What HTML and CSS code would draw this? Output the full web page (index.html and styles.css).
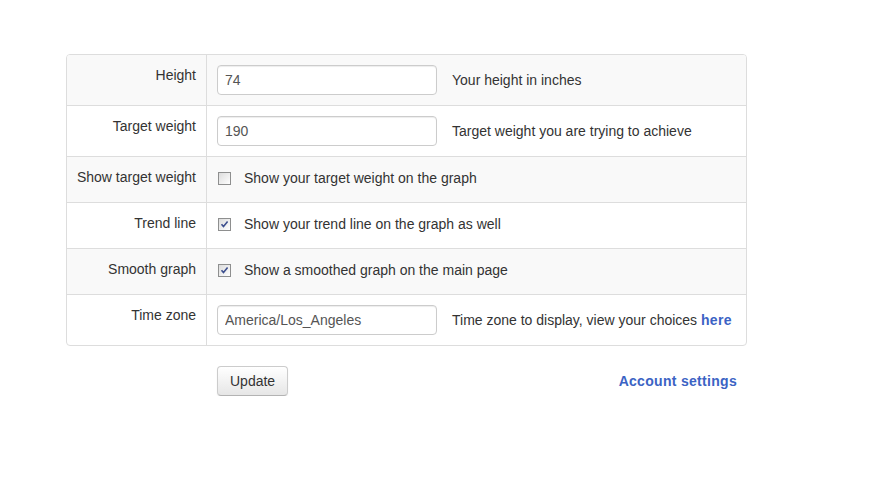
FILE: index.html
```html
<!DOCTYPE html>
<html>
<head>
<meta charset="utf-8">
<link rel="stylesheet" href="styles.css">
</head>
<body>
<div class="page">
  <div class="form-table">
    <div class="row row-input">
      <div class="label">Height</div>
      <div class="value"><input class="text" type="text" value="74"><span class="help">Your height in inches</span></div>
    </div>
    <div class="row row-input">
      <div class="label">Target weight</div>
      <div class="value"><input class="text" type="text" value="190"><span class="help">Target weight you are trying to achieve</span></div>
    </div>
    <div class="row row-check">
      <div class="label">Show target weight</div>
      <div class="value"><label class="check"><span class="box"></span>Show your target weight on the graph</label></div>
    </div>
    <div class="row row-check">
      <div class="label">Trend line</div>
      <div class="value"><label class="check"><span class="box"><svg width="11" height="11" viewBox="0 0 11 11"><path d="M2.5 5.2 L4.5 7.6 L8.6 2.6" fill="none" stroke="#3d4f8e" stroke-width="1.6"/></svg></span>Show your trend line on the graph as well</label></div>
    </div>
    <div class="row row-check">
      <div class="label">Smooth graph</div>
      <div class="value"><label class="check"><span class="box"><svg width="11" height="11" viewBox="0 0 11 11"><path d="M2.5 5.2 L4.5 7.6 L8.6 2.6" fill="none" stroke="#3d4f8e" stroke-width="1.6"/></svg></span>Show a smoothed graph on the main page</label></div>
    </div>
    <div class="row row-input">
      <div class="label">Time zone</div>
      <div class="value"><input class="text" type="text" value="America/Los_Angeles"><span class="help">Time zone to display, view your choices <a href="#" class="link">here</a></span></div>
    </div>
  </div>
  <div class="actions">
    <button class="btn" type="button">Update</button>
    <a href="#" class="link">Account settings</a>
  </div>
</div>
</body>
</html>
```
FILE: styles.css
```css
* { box-sizing: border-box; }
body {
  margin: 0;
  font-family: "Liberation Sans", Arial, sans-serif;
  font-size: 14px;
  line-height: 20px;
  color: #333;
  background: #fff;
}
.page {
  padding: 54px 0 0 66px;
  width: 747px;
}
.form-table {
  width: 681px;
  border: 1px solid #ddd;
  border-radius: 4px;
  overflow: hidden;
}
.row {
  display: grid;
  grid-template-columns: 139px 1fr;
  border-top: 1px solid #ddd;
}
.row:first-child { border-top: 0; }
.row:nth-child(odd) { background: #f9f9f9; }
.row-input { height: 51px; }
.row-input:first-child { height: 50px; }
.row-check { height: 46px; }
.label {
  text-align: right;
  padding: 10px 10px 0 0;
}
.value {
  border-left: 1px solid #ddd;
  padding: 10px 10px 0 10px;
  display: flex;
  align-items: baseline;
}
.row-check .value { padding-top: 11px; }
.text {
  width: 220px;
  height: 30px;
  padding: 4px 7px;
  border: 1px solid #ccc;
  border-radius: 4px;
  box-shadow: inset 0 1px 1px rgba(0,0,0,0.075);
  font-family: "Liberation Sans", Arial, sans-serif;
  font-size: 14px;
  line-height: 20px;
  color: #555;
  background: #fff;
  margin: 0;
}
.help {
  margin-left: 15px;
  color: #333;
}
.link {
  color: #3b63c4;
  font-weight: bold;
  letter-spacing: 0.3px;
  text-decoration: none;
}
.check {
  display: flex;
  align-items: center;
}
.box {
  width: 13px;
  height: 13px;
  margin: 0 13px 0 1px;
  border: 1px solid #8e8f8f;
  background: linear-gradient(135deg, #dcdcdc 0%, #f4f4f4 70%, #fff 100%);
  display: flex;
  align-items: center;
  justify-content: center;
  flex: none;
}
.box svg { display: block; }
.actions {
  width: 681px;
  margin-top: 20px;
  padding: 0 10px 0 151px;
  display: flex;
  justify-content: space-between;
  align-items: center;
}
.btn {
  height: 30px;
  padding: 4px 12px;
  font-family: "Liberation Sans", Arial, sans-serif;
  font-size: 14px;
  line-height: 20px;
  color: #333;
  background: linear-gradient(#ffffff, #e6e6e6);
  border: 1px solid #ccc;
  border-bottom-color: #b3b3b3;
  border-radius: 4px;
  box-shadow: inset 0 1px 0 rgba(255,255,255,0.2), 0 1px 2px rgba(0,0,0,0.05);
  margin: 0;
}
```
